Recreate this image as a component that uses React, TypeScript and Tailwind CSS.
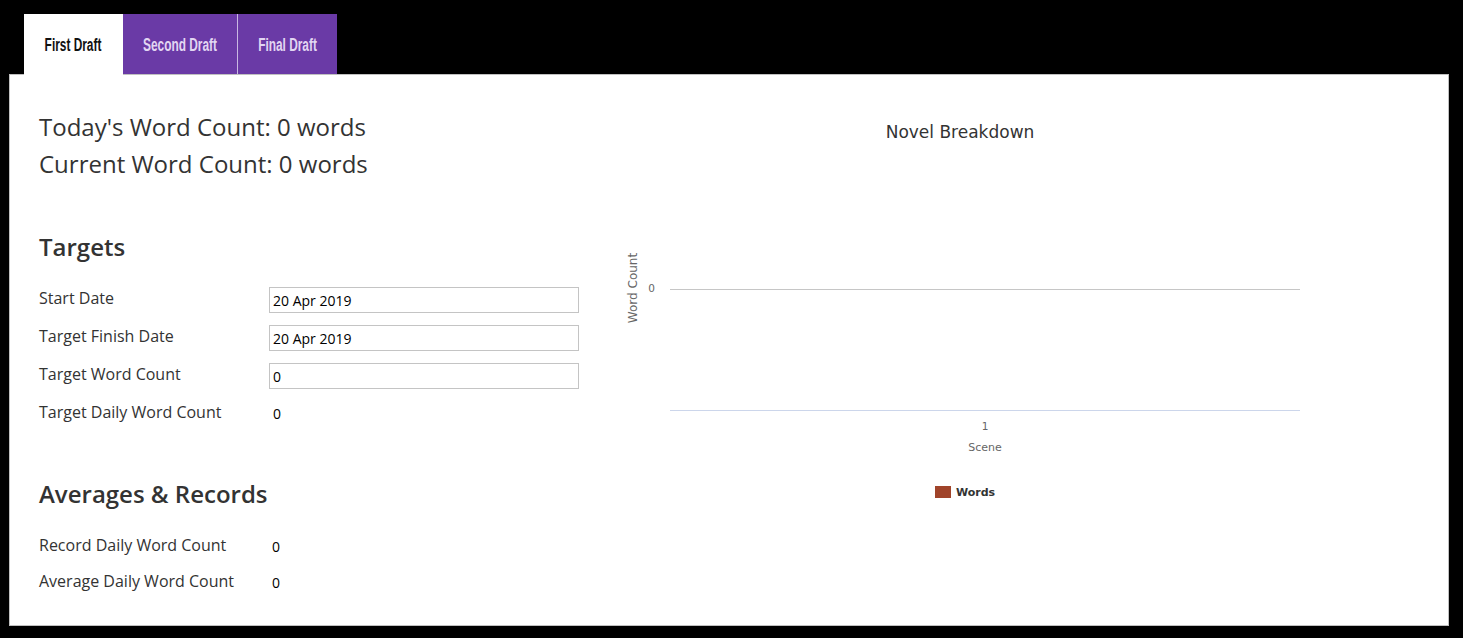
const tabFont = { fontFamily: '"Liberation Sans", Arial, sans-serif' };

function Tab({ label, active, className }: { label: string; active?: boolean; className: string }) {
  return (
    <div className={`flex items-start justify-center pt-[19px] ${className}`} style={tabFont}>
      <span
        className={`inline-block scale-x-[0.66] text-[18px] font-bold leading-[24px] ${active ? "text-[#111]" : "text-[#e2d6f2]"}`}
      >
        {label}
      </span>
    </div>
  );
}

function Tabs() {
  return (
    <div className="ml-[15px] flex h-[60px]">
      <Tab label="First Draft" active className="relative z-10 h-[61px] w-[99px] bg-white" />
      <Tab label="Second Draft" className="h-[60px] w-[115px] border-r border-[#c9b8e3] bg-[#6a3aa6]" />
      <Tab label="Final Draft" className="h-[60px] w-[99px] bg-[#6a3aa6]" />
    </div>
  );
}

function Field({ label, value, input }: { label: string; value: string; input?: boolean }) {
  return (
    <div className="flex h-[38px] items-start">
      <div className="w-[230px] text-[16px] leading-[22px]">{label}</div>
      {input ? (
        <input
          readOnly
          value={value}
          className="h-[26px] w-[310px] border border-[#c4c4c4] px-[3px] text-[14px] text-black outline-none"
        />
      ) : (
        <div className="pl-[4px] pt-[3px] text-[14px] leading-[20px] text-black">{value}</div>
      )}
    </div>
  );
}

function Chart() {
  const f = '"DejaVu Sans", "Liberation Sans", sans-serif';
  return (
    <svg width="680" height="420" className="block">
      <text x="340" y="30" textAnchor="middle" fontFamily={f} fontSize="17" fill="#333">
        Novel Breakdown
      </text>
      <line x1="50" y1="181.5" x2="680" y2="181.5" stroke="#c6c6c6" strokeWidth="1" />
      <line x1="50" y1="302.5" x2="680" y2="302.5" stroke="#ccd6eb" strokeWidth="1" />
      <text x="35" y="184" textAnchor="end" fontFamily={f} fontSize="10.5" fill="#666">0</text>
      <text
        transform="translate(17 180) rotate(-90)"
        textAnchor="middle"
        fontFamily={f}
        fontSize="12"
        fill="#666"
      >
        Word Count
      </text>
      <text x="365" y="322" textAnchor="middle" fontFamily={f} fontSize="10.5" fill="#666">1</text>
      <text x="365" y="343" textAnchor="middle" fontFamily={f} fontSize="11" fill="#666">Scene</text>
      <rect x="315" y="378" width="16" height="12" fill="#a0442a" />
      <text x="336" y="388" fontFamily={f} fontSize="11" fontWeight="bold" fill="#333">Words</text>
    </svg>
  );
}

export default function App() {
  return (
    <div className="h-[638px] w-full bg-black pl-[9px] pr-[14px] pt-[14px]" style={{ fontFamily: '"Open Sans", "Liberation Sans", sans-serif' }}>
      <Tabs />
      <div className="flex h-[552px] border border-[#c0c0c0] bg-white pl-[29px] pt-[33px] text-[#333]">
        <div className="w-[581px]">
          <div className="text-[24px] leading-[37px]">Today's Word Count: 0 words</div>
          <div className="text-[24px] leading-[37px]">Current Word Count: 0 words</div>

          <h2 className="mt-[46px] text-[24px] font-semibold leading-[37px]">Targets</h2>
          <div className="mt-[22px]">
            <Field label="Start Date" value="20 Apr 2019" input />
            <Field label="Target Finish Date" value="20 Apr 2019" input />
            <Field label="Target Word Count" value="0" input />
            <Field label="Target Daily Word Count" value="0" />
          </div>

          <h2 className="mt-[36px] text-[24px] font-semibold leading-[37px]">Averages &amp; Records</h2>
          <div className="mt-[22px]">
            <div className="flex h-[36px] items-start">
              <div className="w-[230px] text-[16px] leading-[22px]">Record Daily Word Count</div>
              <div className="pl-[3px] pt-[3px] text-[14px] leading-[20px] text-black">0</div>
            </div>
            <div className="flex h-[36px] items-start">
              <div className="w-[230px] text-[16px] leading-[22px]">Average Daily Word Count</div>
              <div className="pl-[3px] pt-[3px] text-[14px] leading-[20px] text-black">0</div>
            </div>
          </div>
        </div>
        <div>
          <Chart />
        </div>
      </div>
    </div>
  );
}
